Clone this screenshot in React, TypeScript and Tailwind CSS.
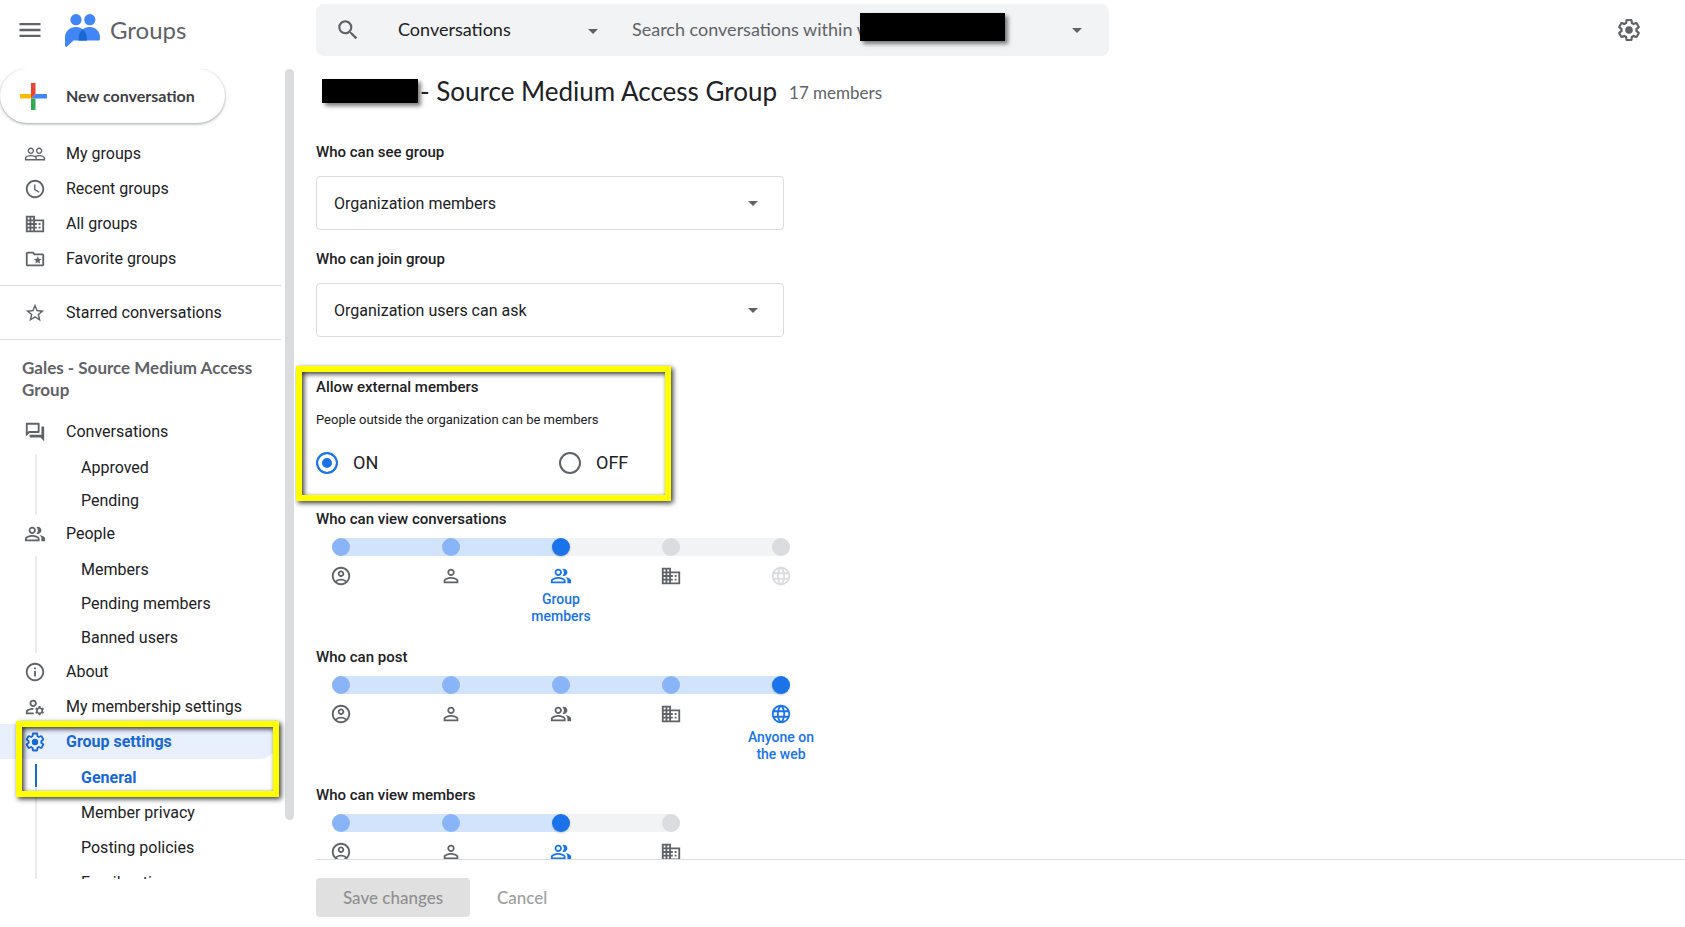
import { useState } from 'react'
import type { ReactNode } from 'react'
import type { IconType } from 'react-icons'
import {
  MdAccessTime,
  MdArrowDropDown,
  MdDomain,
  MdLanguage,
  MdMenu,
  MdOutlineAccountCircle,
  MdOutlineFolderSpecial,
  MdOutlineInfo,
  MdOutlineManageAccounts,
  MdOutlinePeopleAlt,
  MdOutlineQuestionAnswer,
  MdPeopleOutline,
  MdPersonOutline,
  MdSearch,
  MdStarBorder
} from 'react-icons/md'
import clsx from 'clsx'

const levels = [
  { icon: MdOutlineAccountCircle, label: 'Group owners' },
  { icon: MdPersonOutline, label: 'Group managers' },
  { icon: MdOutlinePeopleAlt, label: 'Group members' },
  { icon: MdDomain, label: 'Entire organization' },
  { icon: MdLanguage, label: 'Anyone on the web' }
]

const sliders = [
  { title: 'Who can view conversations', initial: 2, count: 5, max: 3, labelled: true },
  { title: 'Who can post', initial: 4, count: 5, max: 4, labelled: true },
  { title: 'Who can view members', initial: 2, count: 4, max: 3, labelled: false }
]

const gearPath =
  'M13.85 22.25h-3.7c-.74 0-1.36-.54-1.45-1.27l-.27-1.89c-.27-.14-.53-.29-.79-.46l-1.8.72c-.7.26-1.47-.03-1.81-.65L2.2 15.53c-.35-.66-.2-1.44.36-1.88l1.53-1.19c-.01-.15-.02-.3-.02-.46 0-.15.01-.31.02-.46l-1.52-1.19c-.59-.45-.74-1.26-.37-1.88l1.85-3.19c.34-.62 1.11-.9 1.79-.63l1.81.73c.26-.17.52-.32.78-.46l.27-1.91c.09-.7.71-1.25 1.44-1.25h3.7c.74 0 1.36.54 1.45 1.27l.27 1.89c.27.14.53.29.79.46l1.8-.72c.71-.26 1.48.03 1.82.65l1.84 3.18c.36.66.2 1.44-.36 1.88l-1.52 1.19c.01.15.02.3.02.46s-.01.31-.02.46l1.52 1.19c.56.45.72 1.23.37 1.86l-1.86 3.22c-.34.62-1.11.9-1.8.63l-1.8-.72c-.26.17-.52.32-.78.46l-.27 1.91c-.1.68-.72 1.22-1.46 1.22zm-3.23-2h2.76l.37-2.55.53-.22c.44-.18.88-.44 1.34-.78l.45-.34 2.38.96 1.38-2.4-2.03-1.58.07-.56c.03-.26.06-.51.06-.78s-.03-.53-.06-.78l-.07-.56 2.03-1.58-1.39-2.4-2.39.96-.45-.35c-.42-.32-.87-.58-1.33-.77l-.52-.22-.37-2.55h-2.76l-.37 2.55-.53.21c-.44.19-.88.44-1.34.79l-.45.33-2.38-.95-1.39 2.39 2.03 1.58-.07.56a7 7 0 0 0-.06.79c0 .26.02.53.06.78l.07.56-2.03 1.58 1.38 2.4 2.39-.96.45.35c.43.33.86.58 1.33.77l.53.22.38 2.55z'

function GearIcon({ className }: { className?: string }) {
  return (
    <svg viewBox="0 0 24 24" fill="currentColor" className={className} aria-hidden="true">
      <path d={gearPath} />
      <circle cx="12" cy="12" r="3.5" />
    </svg>
  )
}

function GroupsLogo() {
  return (
    <svg viewBox="0 0 35 33" className="h-[33px] w-[35px]" aria-hidden="true">
      <g fill="#4285f4">
        <circle cx="11" cy="5.7" r="5.6" />
        <circle cx="24.8" cy="5.7" r="5.6" />
        <path d="M0 23.5C0 17.5 4.8 13 11 13c6 0 10.800 4.500 10.800 10.500v3H8.500L2.200 32.600C1.300 33.400 0 32.800 0 31.600z" />
        <path d="M13.700 23.500C13.700 17.500 18.500 13 24.600 13 30.500 13 35 17.500 35 23.500V25c0 .9-.6 1.500-1.500 1.500H13.700z" />
      </g>
      <path fill="#1967d2" d="M17.750 15.500c2.500 1.900 4.050 4.700 4.050 8v3h-8.100v-3c0-3.300 1.500-6.100 4.050-8z" />
    </svg>
  )
}

function PlusIcon() {
  return (
    <svg viewBox="0 0 27 27" className="h-[27px] w-[27px]" aria-hidden="true">
      <path fill="#fbbc04" d="M0 11h11.500v4.500H0z" />
      <path fill="#4285f4" d="M15.500 11H27v4.500H11z" />
      <path fill="#34a853" d="M11 15.500h4.500V27H11z" />
      <path fill="#ea4335" d="M11 0h4.500v11L11 15.500z" />
    </svg>
  )
}

// Yellow marker frame drawn over a region
function Highlight({ className }: { className: string }) {
  return (
    <div
      className={clsx(
        'pointer-events-none absolute border-6 border-[#ffff00] shadow-[2px_2px_5px_rgba(0,0,0,0.8),inset_2px_2px_5px_rgba(0,0,0,0.8)]',
        className
      )}
    />
  )
}

function Redacted({ className }: { className: string }) {
  return <span className={clsx('bg-black shadow-[3px_3px_4px_rgba(0,0,0,0.5)]', className)} />
}

function NavItem({ icon: Icon, label, active }: { icon: IconType | typeof GearIcon; label: string; active?: boolean }) {
  return (
    <a
      href="#"
      className={clsx(
        'flex h-[35px] items-center gap-5 pl-6',
        active ? 'mr-1 rounded-r-full bg-[#e8f0fe] font-bold text-[#1967d2]' : 'text-[#202124]'
      )}
    >
      <Icon className={clsx('h-[22px] w-[22px]', !active && 'text-[#5f6368]')} />
      {label}
    </a>
  )
}

function SubNav({ items, rowClass, active }: { items: string[]; rowClass: string; active?: string }) {
  return (
    <div className="flex pb-px pl-[35px]">
      <div className="mt-[5px] w-0.5 bg-[#e8eaed]">{active && <div className="h-[23px] bg-[#1967d2]" />}</div>
      <ul className="pl-11">
        {items.map((item) => (
          <li key={item} className={clsx('flex items-center', rowClass)}>
            <a href="#" className={item === active ? 'font-bold text-[#1967d2]' : ''}>
              {item}
            </a>
          </li>
        ))}
      </ul>
    </div>
  )
}

function SelectField({ id, label, children }: { id: string; label: string; children: ReactNode }) {
  return (
    <div className="mb-[19px]">
      <label htmlFor={id} className="block text-[15px] leading-5 font-medium">
        {label}
      </label>
      <div className="relative mt-3.5 max-w-[468px]">
        <select
          id={id}
          className="h-[54px] w-full appearance-none rounded border border-[#dadce0] bg-white pt-0.5 pr-12 pl-[17px] text-base"
        >
          {children}
        </select>
        <MdArrowDropDown className="pointer-events-none absolute top-[15px] right-[19px] h-6 w-6 text-[#5f6368]" />
      </div>
    </div>
  )
}

function AccessSlider({ title, initial, count, max, labelled }: (typeof sliders)[number]) {
  const [value, setValue] = useState(initial)

  return (
    <section className="h-[138px]">
      <h2 className="mb-[9px] text-[15px] leading-5 font-medium">{title}</h2>
      <div className="relative ml-4 w-fit">
        <ul className="flex">
          {levels.slice(0, count).map(({ icon: Icon, label }, i) => {
            const first = i === 0
            const last = i === count - 1
            return (
              <li key={label} className={last ? 'w-[18px]' : 'w-[110px]'}>
                <div
                  className={clsx(
                    'h-[18px]',
                    first && 'rounded-l-full',
                    last && 'rounded-r-full',
                    i < value || (last && i === value) ? 'bg-[#d2e3fc]' : 'bg-[#f1f3f4]'
                  )}
                >
                  <div className={clsx('flex h-[18px] w-[18px]', i === value && 'bg-linear-to-r from-[#d2e3fc] from-50% to-transparent to-50%')}>
                    <div
                      className={clsx(
                        'h-[18px] w-[18px] rounded-full',
                        i < value && 'bg-[#8ab4f8]',
                        i === value && 'bg-[#1a73e8] shadow-[0_1px_2px_rgba(60,64,67,0.3)]',
                        i > value && 'bg-[#dadce0]'
                      )}
                    />
                  </div>
                </div>
                <div
                  className={clsx(
                    'mt-[9px] flex w-[18px] flex-col items-center',
                    i === value ? 'text-[#1a73e8]' : i > max ? 'text-[#dadce0]' : 'text-[#5f6368]'
                  )}
                >
                  <Icon className="h-[22px] w-[22px] shrink-0" />
                  {labelled && i === value && (
                    <span className="mt-1 w-[76px] text-center text-sm leading-[17px] font-medium">{label}</span>
                  )}
                </div>
              </li>
            )
          })}
        </ul>
        <input
          type="range"
          aria-label={title}
          min={0}
          max={count - 1}
          value={value}
          onChange={(e) => setValue(Math.min(max, Number(e.target.value)))}
          className="absolute inset-x-0 top-0 h-[18px] cursor-pointer opacity-0"
        />
      </div>
    </section>
  )
}

function Header() {
  return (
    <header className="flex h-[60px] shrink-0 items-center font-['Lato',sans-serif]">
      <div className="flex w-[316px] shrink-0 items-center pl-4">
        <button aria-label="Main menu" className="text-[#5f6368]">
          <MdMenu className="h-7 w-7" />
        </button>
        <a href="#" className="ml-[21px] flex items-center gap-2.5 text-2xl text-[#5f6368]">
          <GroupsLogo />
          Groups
        </a>
      </div>
      <form className="relative flex h-[52px] max-w-[793px] flex-1 items-center rounded-lg bg-[#f1f3f4] pr-5 pl-[19px] text-lg">
        <button type="button" aria-label="Search" className="text-[#5f6368]">
          <MdSearch className="h-[26px] w-[26px]" />
        </button>
        <div className="relative ml-[37px] w-[207px] shrink-0">
          <select aria-label="Search scope" className="w-full appearance-none bg-transparent pb-0.5 text-[#202124]">
            <option>Conversations</option>
            <option>Groups</option>
          </select>
          <MdArrowDropDown className="pointer-events-none absolute top-1 right-0 h-6 w-6 text-[#5f6368]" />
        </div>
        <input
          type="text"
          aria-label="Search conversations"
          placeholder="Search conversations within w"
          className="ml-[27px] min-w-0 flex-1 bg-transparent pb-0.5 outline-none placeholder:text-[#5f6368]"
        />
        <Redacted className="absolute top-[9px] right-[104px] h-7 w-[145px]" />
        <button type="button" aria-label="Search options" className="text-[#5f6368]">
          <MdArrowDropDown className="h-6 w-6" />
        </button>
      </form>
      <button aria-label="Settings" className="mr-[43px] ml-auto text-[#5f6368]">
        <GearIcon className="h-[26px] w-[26px]" />
      </button>
    </header>
  )
}

function Sidebar() {
  return (
    <aside className="mt-[9px] mb-12 flex w-[295px] shrink-0 gap-1 overflow-hidden">
      <nav className="w-[281px] leading-5">
        <button className="flex h-[54px] w-[225px] items-center gap-[19px] rounded-full pl-5 font-['Lato',sans-serif] text-base font-bold text-[#3c4043] shadow-[0_1px_2px_rgba(60,64,67,0.3),0_1px_3px_1px_rgba(60,64,67,0.15)]">
          <PlusIcon />
          New conversation
        </button>
        <div className="mt-[13px] border-b border-[#dadce0] pb-[9px]">
          <NavItem icon={MdPeopleOutline} label="My groups" />
          <NavItem icon={MdAccessTime} label="Recent groups" />
          <NavItem icon={MdDomain} label="All groups" />
          <NavItem icon={MdOutlineFolderSpecial} label="Favorite groups" />
        </div>
        <div className="border-b border-[#dadce0] py-[9px]">
          <NavItem icon={MdStarBorder} label="Starred conversations" />
        </div>
        <h2 className="mt-[17px] mb-[13px] pr-6 pl-[22px] font-['Lato',sans-serif] text-[17px] leading-[22px] font-bold text-[#5f6368]">
          Gales - Source Medium Access Group
        </h2>
        <NavItem icon={MdOutlineQuestionAnswer} label="Conversations" />
        <SubNav items={['Approved', 'Pending']} rowClass="h-[33px] pt-1" />
        <NavItem icon={MdOutlinePeopleAlt} label="People" />
        <SubNav items={['Members', 'Pending members', 'Banned users']} rowClass="h-[34px] pt-1" />
        <NavItem icon={MdOutlineInfo} label="About" />
        <NavItem icon={MdOutlineManageAccounts} label="My membership settings" />
        <div className="relative">
          <NavItem icon={GearIcon} label="Group settings" active />
          <SubNav
            items={['General', 'Member privacy', 'Posting policies', 'Email options']}
            rowClass="h-[35px] pt-0.5"
            active="General"
          />
          <Highlight className="top-[-3px] right-0.5 left-4 h-[76px]" />
        </div>
      </nav>
      <div className="h-[92.7%] w-[9px] rounded-full bg-[#dadce0]" />
    </aside>
  )
}

export default function App() {
  const [external, setExternal] = useState('ON')

  return (
    <div className="flex h-screen flex-col overflow-hidden bg-white font-['Roboto',sans-serif] text-base text-[#202124]">
      <Header />
      <div className="flex min-h-0 flex-1">
        <Sidebar />
        <main className="flex min-w-0 flex-1 flex-col">
          <div className="min-h-0 flex-1 overflow-hidden pl-[21px]">
            <div className="mb-5 flex h-[62px] items-center font-['Lato',sans-serif]">
              <Redacted className="ml-1.5 h-6 w-24" />
              <h1 className="ml-0.5 text-[26px]">- Source Medium Access Group</h1>
              <span className="ml-3 pt-1 text-[17px] text-[#5f6368]">17 members</span>
            </div>
            <SelectField id="see" label="Who can see group">
              <option>Organization members</option>
              <option>Group members</option>
            </SelectField>
            <SelectField id="join" label="Who can join group">
              <option>Organization users can ask</option>
              <option>Only invited users</option>
            </SelectField>
            <fieldset className="relative mt-10 mb-[35px]">
              <legend className="text-[15px] leading-5 font-medium">Allow external members</legend>
              <p className="mt-[13px] text-[13px] leading-5">People outside the organization can be members</p>
              <div className="mt-[22px] flex h-[22px] items-center text-lg">
                {['ON', 'OFF'].map((option) => (
                  <label key={option} className="flex w-[243px] items-center gap-[15px]">
                    <input
                      type="radio"
                      name="external"
                      checked={external === option}
                      onChange={() => setExternal(option)}
                      className="h-[22px] w-[22px] appearance-none rounded-full border-2 border-[#5f6368] checked:border-[#1a73e8] checked:bg-[#1a73e8] checked:shadow-[inset_0_0_0_4px_white]"
                    />
                    {option}
                  </label>
                ))}
              </div>
              <Highlight className="top-[-31px] -left-5 h-[135px] w-[375px]" />
            </fieldset>
            {sliders.map((slider) => (
              <AccessSlider key={slider.title} {...slider} />
            ))}
          </div>
          <footer className="ml-[21px] flex h-[68px] shrink-0 items-start border-t border-[#dadce0] pt-[18px] font-['Lato',sans-serif] text-[17px] font-medium">
            <button disabled className="h-[39px] w-[154px] rounded bg-[#e0e0e0] text-[#8f8f8f]">
              Save changes
            </button>
            <button disabled className="ml-[27px] h-[39px] text-[#9e9e9e]">
              Cancel
            </button>
          </footer>
        </main>
      </div>
    </div>
  )
}
